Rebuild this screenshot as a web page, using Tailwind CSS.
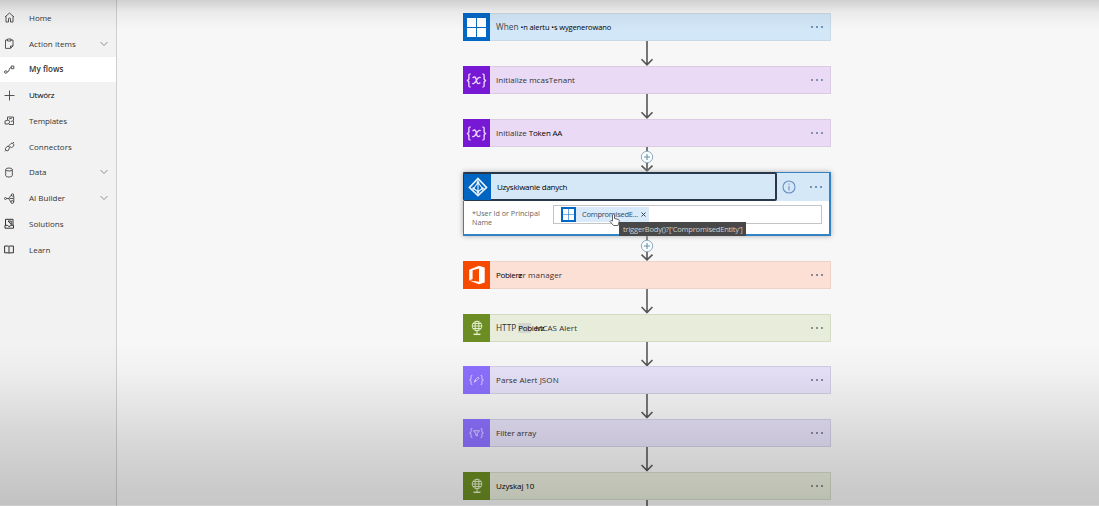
<!DOCTYPE html>
<html lang="pl">
<head>
<meta charset="utf-8">
<title>My flows</title>
<script src="https://cdn.jsdelivr.net/npm/@tailwindcss/browser@4"></script>
</head>
<body class="relative flex h-[506px] w-[1099px] overflow-hidden bg-[#f7f7f7] font-['Open_Sans',sans-serif] text-[8px] leading-[10px] text-[#333]">
<svg class="hidden">
  <symbol id="arrow" viewBox="0 0 14 25"><path d="M7 0V23.5M1.5 18.2L7 23.8L12.500 18.200" fill="none" stroke="#555" stroke-width="1.600"/></symbol>
  <symbol id="plusarrow" viewBox="0 0 14 25"><path d="M7 0V23.500M1.500 18.700L7 23.800L12.500 18.700" fill="none" stroke="#555" stroke-width="1.600"/><circle cx="7" cy="10" r="5.700" fill="#fbfdfe" stroke="#8db0c4"/><path d="M7 7v6M4 10h6" stroke="#6493ad" stroke-width="1.100"/></symbol>
  <symbol id="dots" viewBox="0 0 14 4"><path d="M1 1h2v2H1zM6 1h2v2H6zM11 1h2v2h-2z" fill="currentColor"/></symbol>
  <symbol id="chev" viewBox="0 0 8 6"><path d="M.5 1L4 4.500L7.500 1" fill="none" stroke="#858585" stroke-width=".9"/></symbol>
  <symbol id="win" viewBox="0 0 20 20"><path d="M0 0h9.500v9.500H0zM10.500 0H20v9.500h-9.500zM0 10.500h9.500V20H0zM10.500 10.500H20V20h-9.500z" fill="#fff"/></symbol>
  <symbol id="braces" viewBox="0 0 20 14"><path d="M4.500 .7C2 .7 2.800 3 2.800 4.500S2.300 7 .8 7c1.500 0 2 1 2 2.500S2 13.300 4.500 13.300M15.500 .7c2.500 0 1.700 2.300 1.700 3.800S17.700 7 19.200 7c-1.500 0-2 1-2 2.500s.8 3.800-1.700 3.800" fill="none" stroke="currentColor" stroke-width="1.300"/></symbol>
  <symbol id="x" viewBox="0 0 20 14"><use href="#braces" width="20" height="14"/><path d="M6.300 4.700C8.300 2.700 9.300 3.700 9.900 6.800s1.600 4.200 3.700 2.200M14 4.200c-2.200-1-3.500 1.300-4.300 2.900S7.300 10.800 6 9.600" fill="none" stroke="currentColor" stroke-width="1.300"/></symbol>
  <symbol id="globe" viewBox="0 0 14 16"><g fill="none" stroke="#e3edcb" stroke-width="1"><circle cx="7" cy="6" r="4.800"/><ellipse cx="7" cy="6" rx="2" ry="4.800"/><path d="M2.200 6h9.600M3 3.500h8M3 8.500h8M7 11v3"/><path d="M3.500 14.300h7" stroke-width="1.500"/></g></symbol>
</svg>

<nav class="flex w-[117px] shrink-0 flex-col border-r border-[#cfcfcf] bg-[#f2f2f2] pt-[5px]">
  <a class="flex h-[25.750px] items-center pr-2 pl-1"><svg class="mr-[14px] size-[11px]" viewBox="0 0 11 11" fill="none" stroke="#444" stroke-width=".9"><path d="M1 5L5.500 1L10 5M2 4.500V10h2.500V7a1 1 0 0 1 2 0v3H9V4.500"/></svg><span class="tracking-[-0.020px]">Home</span></a>
  <a class="flex h-[25.750px] items-center pr-2 pl-1"><svg class="mr-[14px] size-[11px]" viewBox="0 0 11 11" fill="none" stroke="#444" stroke-width=".9"><path d="M3.500 2H1.500v8.400h5L9 8V2H7M3.500 1h3.500v2H3.500zM6.500 10V8H9"/></svg><span class="tracking-[0.050px]">Action items</span><svg class="ml-auto h-[6px] w-2"><use href="#chev"/></svg></a>
  <a class="flex h-[25.750px] items-center bg-white pr-2 pl-1"><svg class="mr-[14px] size-[11px]" viewBox="0 0 11 11" fill="none" stroke="#444" stroke-width=".9"><circle cx="1.800" cy="8" r="1.300"/><path d="M3.200 8C6 8 4.500 3.500 7 3.500M7.300 2h2.500v2.700H7.300z"/></svg><span class="font-semibold tracking-[0.050px] text-[#333]">My flows</span></a>
  <a class="flex h-[25.750px] items-center pr-2 pl-1"><svg class="mr-[14px] size-[11px]" viewBox="0 0 11 11" fill="none" stroke="#444" stroke-width=".9"><path d="M5.500 .5v10M.5 5.500h10"/></svg><span class="tracking-[-0.250px] text-black">Utwórz</span></a>
  <a class="flex h-[25.750px] items-center pr-2 pl-1"><svg class="mr-[14px] size-[11px]" viewBox="0 0 11 11" fill="none" stroke="#444" stroke-width=".9"><path d="M3.500 5V2h6v3.500L7 6.500M1 6l3-1 2 1.500L4.500 9H1zM5 9.500h4.500V6M5 4l3-1"/></svg><span class="tracking-[-0.100px]">Templates</span></a>
  <a class="flex h-[25.750px] items-center pr-2 pl-1"><svg class="mr-[14px] size-[11px]" viewBox="0 0 11 11" fill="none" stroke="#444" stroke-width=".9"><path d="M5 4.500l2-2a1.800 1.800 0 0 1 2.500 2.500l-2 2zM5.500 6.500l-1.500-1.500-2 1.500a1.800 1.800 0 0 0 2.500 2.800zM8.800 2.200L10 1M1 10.300l1.200-1.200"/></svg><span>Connectors</span></a>
  <a class="flex h-[25.750px] items-center pr-2 pl-1"><svg class="mr-[14px] size-[11px]" viewBox="0 0 11 11" fill="none" stroke="#444" stroke-width=".9"><ellipse cx="5" cy="2.500" rx="3.300" ry="1.500"/><path d="M1.700 2.500v6c0 2 6.600 2 6.600 0v-6"/></svg><span>Data</span><svg class="ml-auto h-[6px] w-2"><use href="#chev"/></svg></a>
  <a class="flex h-[25.750px] items-center pr-2 pl-1"><svg class="mr-[14px] size-[11px]" viewBox="0 0 11 11" fill="none" stroke="#444" stroke-width=".9"><circle cx="1.500" cy="5.500" r="1"/><path d="M2.500 5.500h3M4.500 5.500L7.500 2M4.500 5.500L7 9"/><circle cx="8.500" cy="2" r="1.200"/><circle cx="8.200" cy="9" r="1.400"/><path d="M9.800 3v6M6 5.500h3.500"/></svg><span>AI Builder</span><svg class="ml-auto h-[6px] w-2"><use href="#chev"/></svg></a>
  <a class="flex h-[25.750px] items-center pr-2 pl-1"><svg class="mr-[14px] size-[11px]" viewBox="0 0 11 11" fill="none" stroke="#333" stroke-width="1"><path d="M1.500 7.300V1.300h7.500V7M1 7.300h2.500l.8 1h1.700l.7-1h2.800V10.200H1zM4 3h3.200v3.500M4 3l3.500 3.700"/></svg><span>Solutions</span></a>
  <a class="flex h-[25.750px] items-center pr-2 pl-1"><svg class="mr-[14px] size-[11px]" viewBox="0 0 11 11" fill="none" stroke="#333" stroke-width="1"><path d="M.6 2h3.600L5 2.700 5.800 2h3.600v6.800H5.800L5 9.500l-.8-.7H.6zM5 2.700V9"/></svg><span>Learn</span></a>
</nav>

<main class="ml-[346px] flex w-[368px] shrink-0 flex-col pt-[13px]">
  <section class="flex h-7 shrink-0 items-center border border-[#c9d8e5] bg-[#d2e7f8] pr-[6px] text-[#6f94bd]"><span class="-my-px -ml-px flex h-7 w-[27px] items-center justify-center bg-[#0067c5]"><svg class="size-[19px]"><use href="#win"/></svg></span><span class="ml-[6px] text-[8.300px] text-[#444]">When</span><span class="ml-[2px] text-[7.500px] tracking-[-0.120px] text-black">•n alertu •s wygenerowano</span><svg class="ml-auto h-1 w-[14px]"><use href="#dots"/></svg></section>
  <svg class="ml-[177px] h-[25px] w-[14px] shrink-0"><use href="#arrow"/></svg>
  <section class="flex h-7 shrink-0 items-center border border-[#d9cce3] bg-[#eadaf6] pr-[6px] text-[#8391b5]"><span class="-my-px -ml-px flex h-7 w-[27px] items-center justify-center bg-[#7719d4] text-[#e9d4fa]"><svg class="h-[15px] w-[21px]"><use href="#x"/></svg></span><span class="ml-[6px] tracking-[0.030px] text-[#333]">Initialize mcasTenant</span><svg class="ml-auto h-1 w-[14px]"><use href="#dots"/></svg></section>
  <svg class="ml-[177px] h-[25px] w-[14px] shrink-0"><use href="#arrow"/></svg>
  <section class="flex h-7 shrink-0 items-center border border-[#d9cce3] bg-[#eadaf6] pr-[6px] text-[#8391b5]"><span class="-my-px -ml-px flex h-7 w-[27px] items-center justify-center bg-[#7719d4] text-[#e9d4fa]"><svg class="h-[15px] w-[21px]"><use href="#x"/></svg></span><span class="ml-[6px] text-[#333]">Initialize</span><span class="ml-[2px] tracking-[-0.200px] text-black">Token AA</span><svg class="ml-auto h-1 w-[14px]"><use href="#dots"/></svg></section>
  <svg class="ml-[177px] h-[25px] w-[14px] shrink-0"><use href="#plusarrow"/></svg>

  <section class="relative flex h-16 shrink-0 flex-col border border-[#3383c4] bg-white shadow-[0_0_5px_#aaa,inset_-1px_-1px_0_#3383c4]">
    <div class="-m-px flex h-[29px] shrink-0 items-center border-t border-r-2 border-[#3383c4] bg-[#d5e8f8] pr-[6px] text-[#6f94bd]">
      <div class="-mt-px flex h-[29px] w-[314px] items-center rounded-[2px] border-2 border-[#28384a]"><span class="-ml-px flex h-[26px] w-[27px] items-center justify-center bg-[#0065c0]"><svg class="size-5" viewBox="0 0 20 20" fill="none" stroke="#e9f5ff" stroke-width="1.700"><path d="M10 1.500L18.500 10.500L10 18.500L1.500 10.500z"/><path d="M10 2v16M10 5.500L5.500 11.500L10 14.500L14.500 11.500z" stroke-width="1.100"/><g fill="#e9f5ff" stroke="none"><circle cx="10" cy="5.500" r="1.300"/><circle cx="5.500" cy="11.500" r="1.300"/><circle cx="14.500" cy="11.500" r="1.300"/><circle cx="10" cy="15" r="1.300"/></g></svg></span><span class="ml-[6px] tracking-[-0.250px] text-black">Uzyskiwanie danych</span></div>
      <svg class="ml-[5px] size-[14px]" viewBox="0 0 14 14" fill="none" stroke="#6b8fc0" stroke-width="1.100"><circle cx="7" cy="7" r="6"/><path d="M7 6v4.500M7 3.500v1.300"/></svg>
      <svg class="ml-auto h-1 w-[14px]"><use href="#dots"/></svg>
    </div>
    <div class="flex pt-[5px] pl-[8px]">
      <span class="w-[81px] pt-[4px] text-[7.200px] leading-[9px] text-[#666]">*User Id or Principal<br>Name</span>
      <div class="flex h-[19px] w-[269px] items-center border border-[#c4c4c4] pl-[7px]"><span class="-mt-px flex h-[15px] w-[88px] items-center bg-[#d9eafa]"><span class="flex size-[15px] shrink-0 items-center justify-center bg-[#0067c5]"><svg class="size-[11px]"><use href="#win"/></svg></span><span class="ml-[6px] text-[7.500px] tracking-[-0.250px] text-[#34485c]">CompromisedE...</span><svg class="mr-[3px] ml-auto size-[5px]" viewBox="0 0 5 5"><path d="M.5.5l4 4M4.500.5l-4 4" stroke="#34485c"/></svg></span></div>
    </div>
    <div class="absolute top-[49px] left-[155px] z-10 flex h-[14px] w-[127px] items-center bg-[#484848] pl-1 text-[7.500px] whitespace-nowrap text-[#d0d0d0]"><span class="tracking-[-0.180px]">triggerBody()?['CompromisedEntity']</span></div>
    <svg class="absolute top-[40px] left-[145px] z-20 h-[14px] w-[11px]" viewBox="0 0 11 14"><path d="M3.500 8V2q1-1.500 2 0v3.500l4 1q1 .3.700 2L9 12.500H4.500L1 8.500q.3-1.500 2.500-.5z" fill="#fff" stroke="#555" stroke-width=".9"/></svg>
  </section>
  <svg class="ml-[177px] h-[25px] w-[14px] shrink-0"><use href="#plusarrow"/></svg>

  <section class="flex h-7 shrink-0 items-center border border-[#ecd2c8] bg-[#fde0d5] pr-[6px] text-[#8b8994]"><span class="-my-px -ml-px flex h-7 w-[27px] items-center justify-center bg-[#f64a00]"><svg class="h-5 w-[18px]" viewBox="0 0 18 20"><path fill="#fff" fill-rule="evenodd" d="M1.200 4.700L11 .8l5.700 1.700v15L11 19.200 1.200 15.500l9.800 1.300V3.500L4.600 5.200v8.700L1.200 15.500z"/></svg></span><span class="relative ml-[6px] tracking-[-0.300px] text-black">Pobierz</span><span class="-ml-[4px] tracking-[0.100px] text-[#433]">er manager</span><svg class="ml-auto h-1 w-[14px]"><use href="#dots"/></svg></section>
  <svg class="ml-[177px] h-[24.700px] w-[14px] shrink-0"><use href="#arrow"/></svg>
  <section class="flex h-7 shrink-0 items-center border border-[#d3dbc5] bg-[#e8ecdb] pr-[6px] text-[#86958d]"><span class="-my-px -ml-px flex h-7 w-[27px] items-center justify-center bg-[#6b8d23]"><svg class="h-4 w-[14px]"><use href="#globe"/></svg></span><span class="ml-[6px] text-[8.300px] text-[#333]">HTTP</span><span class="relative z-10 ml-[2px] bg-linear-to-r from-[#d2d6cc] from-50% to-transparent to-50% tracking-[-0.300px] text-black">Pobierz</span><span class="-ml-[9px] tracking-[0.040px] text-[#333]">MCAS Alert</span><svg class="ml-auto h-1 w-[14px]"><use href="#dots"/></svg></section>
  <svg class="ml-[177px] h-[24.700px] w-[14px] shrink-0"><use href="#arrow"/></svg>
  <section class="flex h-7 shrink-0 items-center border border-[#d2cde4] bg-[#e7e2f8] pr-[6px] text-[#8887a8]"><span class="-my-px -ml-px flex h-7 w-[27px] items-center justify-center bg-[#8c70ff] text-[#e5dcff]"><svg class="h-3 w-[15px]" viewBox="0 0 20 14"><use href="#braces" width="20" height="14"/><path d="M7 10l1-3 4-4 1.500 1.500-4 4zM8 7l1.500 1.500" fill="none" stroke="currentColor"/></svg></span><span class="ml-[6px] tracking-[0.080px] text-[#333]">Parse Alert JSON</span><svg class="ml-auto h-1 w-[14px]"><use href="#dots"/></svg></section>
  <svg class="ml-[177px] h-[24.700px] w-[14px] shrink-0"><use href="#arrow"/></svg>
  <section class="flex h-7 shrink-0 items-center border border-[#d2cde4] bg-[#e7e2f8] pr-[6px] text-[#8887a8]"><span class="-my-px -ml-px flex h-7 w-[27px] items-center justify-center bg-[#8c70ff] text-[#e5dcff]"><svg class="h-3 w-[15px]" viewBox="0 0 20 14"><use href="#braces" width="20" height="14"/><path d="M6 4h8l-3 3.500V11L9 10V7.500z" fill="none" stroke="currentColor" stroke-width="1.200"/></svg></span><span class="ml-[6px] text-[#333]">Filter array</span><svg class="ml-auto h-1 w-[14px]"><use href="#dots"/></svg></section>
  <svg class="ml-[177px] h-[24.700px] w-[14px] shrink-0"><use href="#arrow"/></svg>
  <section class="flex h-7 shrink-0 items-center border border-[#d3dbc5] bg-[#e8ecdb] pr-[6px] text-[#86958d]"><span class="-my-px -ml-px flex h-7 w-[27px] items-center justify-center bg-[#6b8d23]"><svg class="h-4 w-[14px]"><use href="#globe"/></svg></span><span class="ml-[6px] tracking-[-0.100px] text-black">Uzyskaj 10</span><svg class="ml-auto h-1 w-[14px]"><use href="#dots"/></svg></section>
  <svg class="ml-[177px] h-[25px] w-[14px] shrink-0"><use href="#arrow"/></svg>
</main>
<div class="pointer-events-none absolute inset-x-0 top-0 z-30 h-[30px] bg-[linear-gradient(to_bottom,rgb(0_0_0/0.16),rgb(0_0_0/0.05)_40%,transparent)]"></div>
<div class="pointer-events-none absolute inset-x-0 bottom-0 z-30 h-[164px] border-b border-black/15 bg-[linear-gradient(to_bottom,transparent,rgb(0_0_0/0.02)_17%,rgb(0_0_0/0.066)_36%,rgb(0_0_0/0.125)_61%,rgb(0_0_0/0.195))]"></div>
</body>
</html>
